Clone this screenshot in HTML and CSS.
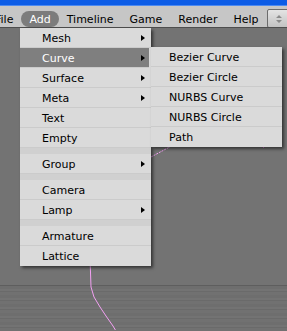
FILE: index.html
```html
<!DOCTYPE html>
<html lang="en">
<head>
  <meta charset="UTF-8" />
  <title>Blender - Add menu</title>
  <link rel="stylesheet" href="styles.css">
</head>
<body>

<div class="screen">
  <div class="titlebar"></div>

  <div class="menubar">
    <span class="menu-item file">File</span>
    <span class="menu-item active">Add</span>
    <span class="menu-item">Timeline</span>
    <span class="menu-item">Game</span>
    <span class="menu-item">Render</span>
    <span class="menu-item">Help</span>
    <span class="spin-btn">
      <svg width="8" height="10" viewBox="0 0 8 10">
        <path d="M4 1 L7 4 L1 4 Z M4 9 L7 6 L1 6 Z" fill="#8a8a8a"/>
      </svg>
    </span>
  </div>

  <div class="viewport">
    <div class="sky"></div>
    <div class="floor"></div>

    <!-- pink wire of the curve in the 3D view -->
    <svg class="wire" width="287" height="302" viewBox="0 29 287 302">
      <polyline points="90,230 90,259 91,288 94,298 100,308 106,317 113,327 116,332"
                fill="none" stroke="#f2a0f2" stroke-width="1"/>
      <line x1="151" y1="158" x2="190" y2="137" stroke="#f2a0f2" stroke-width="1" stroke-dasharray="2 1"/>
      <rect x="263" y="147" width="1" height="2" fill="#d070d0"/>
    </svg>

    <ul class="dropdown main-menu">
      <li class="row has-sub">Mesh</li>
      <li class="row has-sub selected">Curve</li>
      <li class="row has-sub">Surface</li>
      <li class="row has-sub">Meta</li>
      <li class="row">Text</li>
      <li class="row">Empty</li>
      <li class="sep"></li>
      <li class="row has-sub">Group</li>
      <li class="sep"></li>
      <li class="row">Camera</li>
      <li class="row has-sub">Lamp</li>
      <li class="sep"></li>
      <li class="row">Armature</li>
      <li class="row">Lattice</li>
    </ul>

    <ul class="dropdown sub-menu">
      <li class="row">Bezier Curve</li>
      <li class="row">Bezier Circle</li>
      <li class="row">NURBS Curve</li>
      <li class="row">NURBS Circle</li>
      <li class="row">Path</li>
    </ul>
  </div>
</div>

</body>
</html>
```

FILE: styles.css
```css
* {
  box-sizing: border-box;
  margin: 0;
  padding: 0;
}

body {
  font-family: 'DejaVu Sans', sans-serif;
  font-size: 11px;
  background: #737373;
  overflow: hidden;
}

.screen {
  width: 287px;
  height: 331px;
  display: flex;
  flex-direction: column;
  overflow: hidden;
}

.titlebar {
  height: 6px;
  background: #0c5ce6;
  border-bottom: 1px solid #4d8af0;
  flex-shrink: 0;
}

.menubar {
  height: 22px;
  background: #c6c6c6;
  border-bottom: 1px solid #4e4e4e;
  display: flex;
  align-items: flex-start;
  padding-top: 5px;
  flex-shrink: 0;
  white-space: nowrap;
  overflow: hidden;
}

.menu-item {
  height: 16px;
  line-height: 17px;
  padding: 0 8px;
  border-radius: 8px;
  color: #000;
  flex-shrink: 0;
}

.menu-item.file {
  margin-left: -13px;
}

.menu-item.active {
  background: #7c7c7c;
  color: #fff;
}

.spin-btn {
  margin-top: -2px;
  margin-left: 0;
  width: 24px;
  height: 19px;
  flex-shrink: 0;
  border: 1px solid #6c6c6c;
  border-radius: 2px;
  background: linear-gradient(#e4e4e4, #c2c2c2);
  display: flex;
  align-items: center;
  padding-left: 7px;
}

.viewport {
  position: relative;
  flex: 1;
  display: flex;
  flex-direction: column;
}

.sky {
  flex: 1;
  background: #737373;
}

.floor {
  height: 46px;
  border-top: 1px solid #5e5e5e;
  background: repeating-linear-gradient(to bottom,
    #6e6e6e 0, #6e6e6e 3px,
    #737373 3px, #737373 5px,
    #6a6a6a 5px, #6a6a6a 6px,
    #717171 6px, #717171 9px);
}

.wire {
  position: absolute;
  left: 0;
  top: 0;
}

.dropdown {
  position: absolute;
  list-style: none;
  width: 131px;
  background: #dadada;
  box-shadow: 2px 2px 3px rgba(0, 0, 0, 0.55);
}

.main-menu {
  left: 20px;
  top: 0;
}

.sub-menu {
  left: 151px;
  top: 19px;
}

.row {
  position: relative;
  height: 20px;
  padding-top: 2px;
  line-height: 18px;
  border-bottom: 1px solid #cbcbcb;
  color: #000;
  padding-left: 22px;
}

.sub-menu .row {
  padding-left: 18px;
}

.row:last-child {
  border-bottom: none;
}

.row.selected {
  background: #7f7f7f;
  color: #fff;
  margin-right: 2px;
}

.has-sub::after {
  content: "";
  position: absolute;
  right: 6px;
  top: 7px;
  border-left: 4px solid #000;
  border-top: 3.5px solid transparent;
  border-bottom: 3.5px solid transparent;
}

.row.selected::after {
  right: 4px;
}

.sep {
  height: 6px;
  background: #d0d0d0;
}
```
